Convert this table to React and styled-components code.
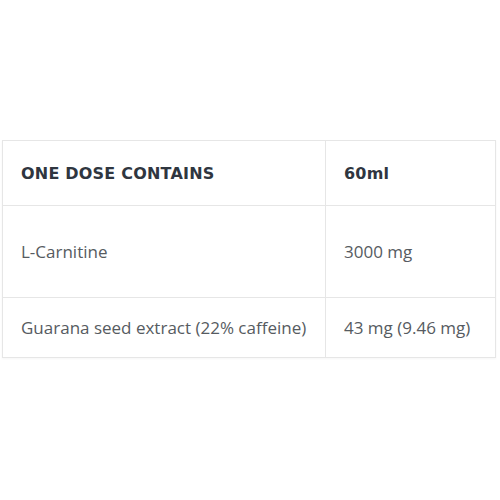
import React from 'react';
import styled, { createGlobalStyle } from 'styled-components';

const GlobalStyle = createGlobalStyle`
	body {
		margin: 0;
		background: #ffffff;
		font-family: 'Open Sans', 'Liberation Sans', sans-serif;
	}
`;

const PageStyled = styled.div`
	width: 500px;
	height: 500px;
	padding: 140px 4px 0 2px;
	box-sizing: border-box;
`;

const TableStyled = styled.table`
	width: 100%;
	border-collapse: collapse;
	border: 1px solid #e6e6e6;
	box-shadow: 0 1px 2px rgba(0, 0, 0, 0.04);
`;

const RowStyled = styled.tr`
	height: ${(p) => p.$height}px;
	border-bottom: 1px solid #e6e6e6;
`;

const CellStyled = styled.td`
	padding: 0 0 0 18px;
	vertical-align: middle;
	border-right: 1px solid #e6e6e6;
	font-size: 17px;
	color: #565b61;
	white-space: nowrap;

	&:first-child {
		width: 304px;
	}
`;

const HeadCellStyled = styled(CellStyled).attrs({ as: 'th' })`
	text-align: left;
	font-family: 'DejaVu Sans', 'Open Sans', sans-serif;
	font-weight: bold;
	font-size: 16px;
	letter-spacing: 0.2px;
	color: #2f3640;
`;

const rows = [
	{ name: 'L-Carnitine', value: '3000 mg', height: 92 },
	{ name: 'Guarana seed extract (22% caffeine)', value: '43 mg (9.46 mg)', height: 60 },
];

export default function App() {
	return (
		<PageStyled>
			<GlobalStyle />
			<TableStyled>
				<thead>
					<RowStyled $height={65}>
						<HeadCellStyled>ONE DOSE CONTAINS</HeadCellStyled>
						<HeadCellStyled>60ml</HeadCellStyled>
					</RowStyled>
				</thead>
				<tbody>
					{rows.map((row) => (
						<RowStyled key={row.name} $height={row.height}>
							<CellStyled>{row.name}</CellStyled>
							<CellStyled>{row.value}</CellStyled>
						</RowStyled>
					))}
				</tbody>
			</TableStyled>
		</PageStyled>
	);
}
